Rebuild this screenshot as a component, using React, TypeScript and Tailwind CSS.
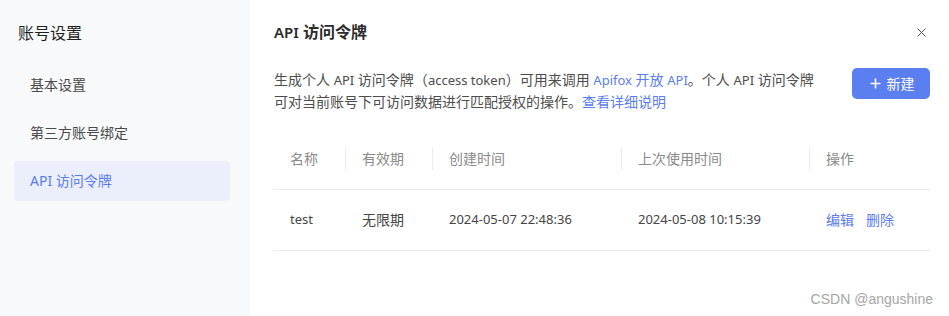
import { Plus, X } from "lucide-react";

const font = { fontFamily: '"Noto Sans", "Noto Sans CJK SC", sans-serif' };

const menu = ["基本设置", "第三方账号绑定", "API 访问令牌"];

// latin runs sit a size below the CJK text, as in the original
function En({ children }: { children: React.ReactNode }) {
  return <span className="text-[13px]">{children}</span>;
}

function Sidebar() {
  return (
    <div className="w-[250px] shrink-0 bg-[#f8f9fb] pl-[14px] pr-[20px] pt-[22px]">
      <div className="pl-[4px] text-[16px] leading-[22px] text-[#1f1f1f]">账号设置</div>
      <div className="mt-[21px] flex flex-col gap-[8px]">
        {menu.map((m, i) => (
          <div
            key={m}
            className={
              i === 2
                ? "h-[40px] rounded-[4px] bg-[#ebeffc] pl-[16px] text-[14px] leading-[40px] text-[#5b7cf0]"
                : "h-[40px] rounded-[4px] pl-[16px] text-[14px] leading-[40px] text-[#4a4a4a]"
            }
          >
            {m}
          </div>
        ))}
      </div>
    </div>
  );
}

function TokenTable() {
  return (
    <table className="mt-[17px] w-full border-collapse text-left text-[14px]">
      <thead>
        <tr className="h-[60px] border-b border-[#ebebeb] text-[#8a8a8a]">
          <th className="w-[71px] pl-[16px] font-normal">名称</th>
          <th className="w-[87px] font-normal">
            <div className="border-l border-[#ececec] pl-[16px] leading-[23px]">有效期</div>
          </th>
          <th className="w-[189px] font-normal">
            <div className="border-l border-[#ececec] pl-[16px] leading-[23px]">创建时间</div>
          </th>
          <th className="w-[188px] font-normal">
            <div className="border-l border-[#ececec] pl-[16px] leading-[23px]">上次使用时间</div>
          </th>
          <th className="font-normal">
            <div className="border-l border-[#ececec] pl-[16px] leading-[23px]">操作</div>
          </th>
        </tr>
      </thead>
      <tbody>
        <tr className="h-[61px] border-b border-[#ebebeb] text-[#454545]">
          <td className="pl-[16px] text-[13px]">test</td>
          <td className="pl-[17px]">无限期</td>
          <td className="pl-[17px] text-[13px]">2024-05-07 22:48:36</td>
          <td className="pl-[17px] text-[13px]">2024-05-08 10:15:39</td>
          <td className="pl-[17px] text-[#5b7cf0]">
            <span className="mr-[12px]">编辑</span>
            <span>删除</span>
          </td>
        </tr>
      </tbody>
    </table>
  );
}

export default function App() {
  return (
    <div className="relative flex h-[316px] w-[949px] overflow-hidden bg-white" style={font}>
      <Sidebar />
      <div className="flex-1 pl-[24px] pr-[19px]">
        <div className="flex h-[44px] items-end justify-between pb-[1px]">
          <div className="text-[16px] font-semibold leading-[22px] text-[#2b2b2b]">
            <span className="text-[15px]">API</span> 访问令牌
          </div>
          <X size={15} strokeWidth={1.5} className="mb-[3px] mr-[1px] text-[#444]" />
        </div>
        <div className="mt-[25px] flex items-start justify-between">
          <p className="text-[14px] leading-[21px] text-[#4d4d4d]">
            生成个人 <En>API</En> 访问令牌（<En>access token</En>）可用来调用{" "}
            <span className="text-[#5b7cf0]">
              <En>Apifox</En> 开放 <En>API</En>
            </span>
            。个人 <En>API</En> 访问令牌
            <br />
            可对当前账号下可访问数据进行匹配授权的操作。
            <span className="text-[#5b7cf0]">查看详细说明</span>
          </p>
          <button className="-mt-[1px] flex h-[31px] w-[78px] items-center justify-center gap-[4px] rounded-[5px] bg-[#5b7ef0] text-[14px] text-white">
            <Plus size={15} strokeWidth={2.5} />
            新建
          </button>
        </div>
        <TokenTable />
      </div>
      <div
        className="absolute bottom-[6px] right-[16px] text-[14px] text-[#a5a5a5]"
        style={{ fontFamily: '"Liberation Sans", sans-serif' }}
      >
        CSDN @angushine
      </div>
    </div>
  );
}
